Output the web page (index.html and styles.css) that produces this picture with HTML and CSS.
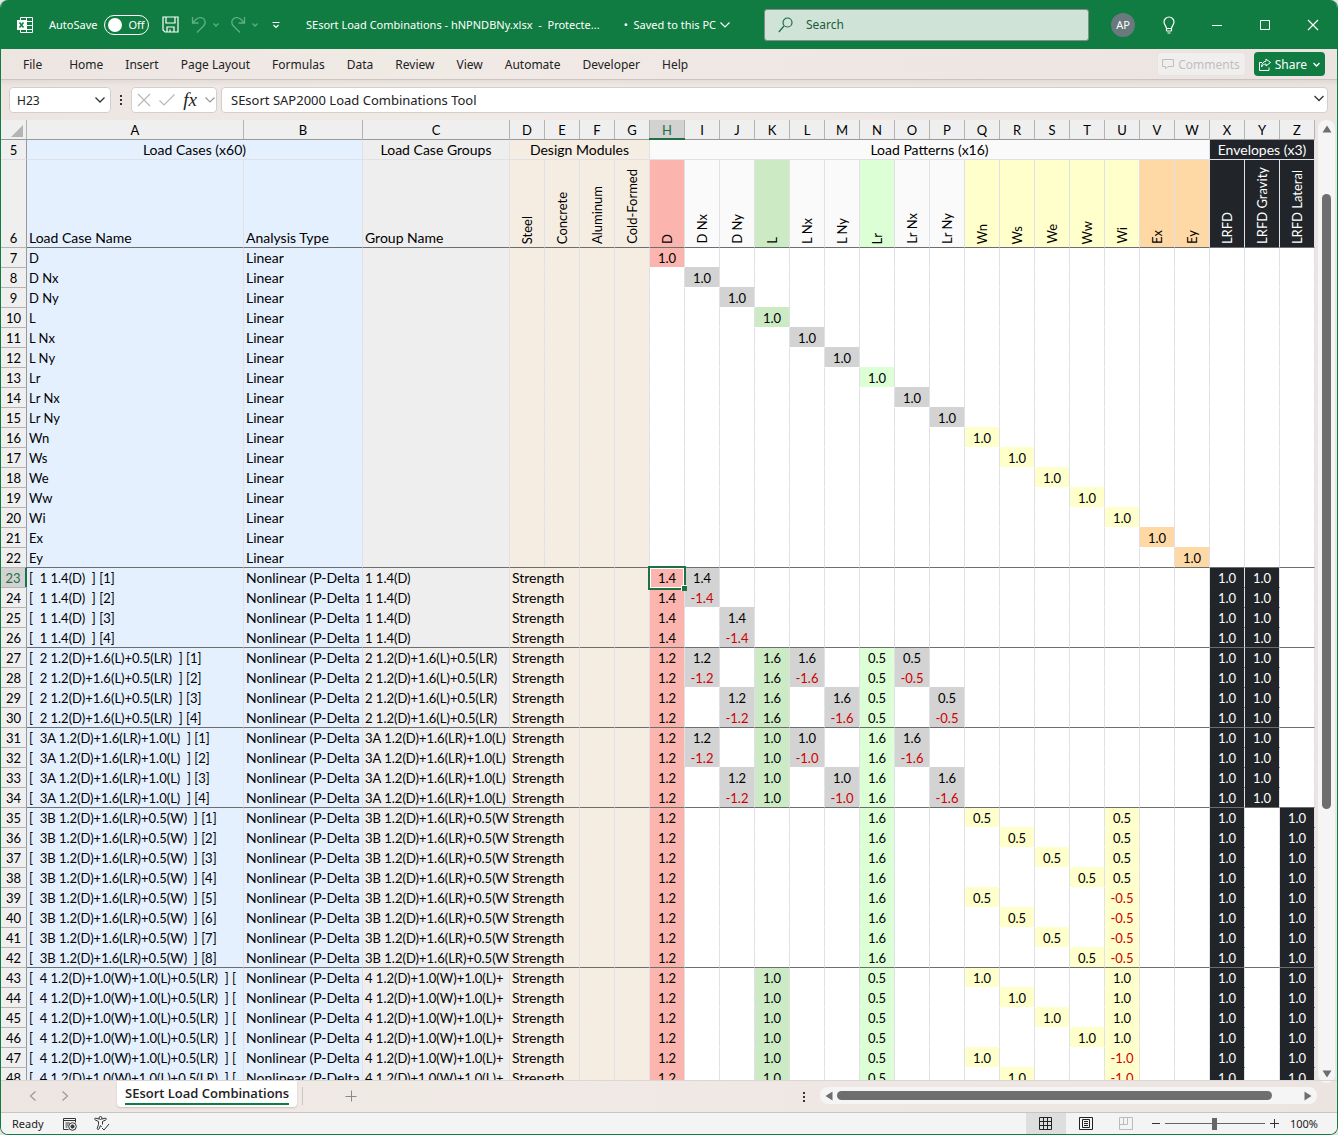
FILE: index.html
```html
<!DOCTYPE html>
<html lang="en">
  <head>
    <meta charset="UTF-8" />
    <meta name="viewport" content="width=device-width, initial-scale=1.0" />
    <title>SEsort Load Combinations</title>
    <link rel="stylesheet" href="styles.css">
  </head>
  <body>
    <div class="window">
      <!-- Title bar -->
      <header class="titlebar">
        <div class="title-left">
          <svg class="app-icon" width="18" height="18" viewBox="0 0 18 18" fill="none" stroke="#fff">
            <path d="M4.5 4V1.5h12v15h-12V14M10.5 1.5v15M10.5 5.5h6M10.5 9.500h6M10.500 13.500h6M4.500 4.500h6M4.500 13.500h6" />
            <path d="M1 4h9v10H1z" fill="#fff" stroke="none" />
            <path d="M3.500 6.500l4 5M7.500 6.500l-4 5" stroke="#107c41" stroke-width="1.500" />
          </svg>
          <label class="autosave">
            <span>AutoSave</span>
            <span class="switch"><input type="checkbox" class="switch-input" /><span class="switch-text">Off</span></span>
          </label>
          <button class="icon-btn" aria-label="Save">
            <svg width="17" height="17" viewBox="0 0 17 17" fill="none" stroke="#fff" stroke-width="1.200">
              <path d="M1 1h15v15H3l-2-2zM4 1v6h9V1M5 16v-5h7v5M8 13.500V16" />
            </svg>
          </button>
          <button class="icon-btn undo" aria-label="Undo">
            <svg width="28" height="18" viewBox="0 0 28 18" fill="none" stroke="#5cb083" stroke-width="1.300">
              <path d="M1.500 1v6h6M1.500 7l4-4c3-2.500 7-1.500 8.300 1.500.9 2.300.2 4-1.300 5.500L6 16.500M22.500 7.500l2.500 2.500 2.500-2.500" />
            </svg>
          </button>
          <button class="icon-btn redo" aria-label="Redo">
            <svg width="28" height="18" viewBox="0 0 28 18" fill="none" stroke="#5cb083" stroke-width="1.300">
              <path d="M14.500 1v6h-6M14.500 7l-4-4C7.500.5 3.500 1.500 2.200 4.500c-.9 2.300-.2 4 1.300 5.500l6.500 6.500M22.500 7.500L25 10l2.500-2.500" />
            </svg>
          </button>
          <button class="icon-btn customize" aria-label="Customize toolbar">
            <svg width="8" height="8" viewBox="0 0 8 8" fill="none" stroke="#fff" stroke-width="1.200">
              <path d="M.5 1.500h7M1.500 4L4 6.500 6.500 4" />
            </svg>
          </button>
        </div>
        <div class="doc-title">
          <span class="doc-name">SEsort Load Combinations - hNPNDBNy.xlsx&nbsp; -&nbsp; Protecte...</span>
          <button class="saved">•&nbsp; Saved to this PC
            <svg width="10" height="6" viewBox="0 0 10 6" fill="none" stroke="#fff" stroke-width="1.200"><path d="M.5.5L5 5 9.500.5" /></svg>
          </button>
        </div>
        <label class="search">
          <svg width="15" height="16" viewBox="0 0 15 16" fill="none" stroke="#1d6b40" stroke-width="1.200">
            <circle cx="9.500" cy="5.500" r="4.500" /><path d="M6 9L.8 15" />
          </svg>
          <input type="text" placeholder="Search" aria-label="Search" />
        </label>
        <div class="title-right">
          <button class="avatar">AP</button>
          <button class="icon-btn" aria-label="Tips">
            <svg width="12" height="18" viewBox="0 0 12 18" fill="none" stroke="#fff" stroke-width="1.200">
              <path d="M3.500 12.500c0-2.500-2.500-3.500-2.500-6.500a5 5 0 0 1 10 0c0 3-2.500 4-2.500 6.500zM3.500 15h5M4.500 17h3M3.500 12v3M8.500 12v3" />
            </svg>
          </button>
          <button class="icon-btn" aria-label="Minimize">
            <svg width="12" height="12" viewBox="0 0 12 12" stroke="#fff"><path d="M1 6.500h10" /></svg>
          </button>
          <button class="icon-btn" aria-label="Maximize">
            <svg width="12" height="12" viewBox="0 0 12 12" fill="none" stroke="#fff"><path d="M1.500 1.500h9v9h-9z" /></svg>
          </button>
          <button class="icon-btn" aria-label="Close">
            <svg width="12" height="12" viewBox="0 0 12 12" stroke="#fff" stroke-width="1.200"><path d="M1 1l10 10M11 1L1 11" /></svg>
          </button>
        </div>
      </header>

      <!-- Ribbon tabs -->
      <nav class="menu">
        <a href="#" class="menu-file">File</a>
        <a href="#">Home</a>
        <a href="#">Insert</a>
        <a href="#">Page Layout</a>
        <a href="#">Formulas</a>
        <a href="#">Data</a>
        <a href="#">Review</a>
        <a href="#">View</a>
        <a href="#">Automate</a>
        <a href="#">Developer</a>
        <a href="#">Help</a>
        <div class="menu-actions">
          <button class="comments" disabled>
            <svg width="12" height="12" viewBox="0 0 12 12" fill="none" stroke="#c0bebe"><path d="M.5 1.500h11v7H6L3.500 11V8.500h-3z" /></svg>
            Comments
          </button>
          <button class="share">
            <svg width="12" height="13" viewBox="0 0 12 13" fill="none" stroke="#fff">
              <path d="M3 4.500H.5v8h9.500V9.500M7 1l4.500 3.500L7 8V6C5 6 3.500 7 2.500 9 2.700 5.500 4.500 3.500 7 3.200z" />
            </svg>
            Share
            <svg class="share-arrow" width="7" height="5" viewBox="0 0 7 5" fill="none" stroke="#fff" stroke-width="1.300"><path d="M.5 1l3 3 3-3" /></svg>
          </button>
        </div>
      </nav>

      <!-- Formula bar -->
      <div class="formula-bar">
        <div class="name-box">
          <input type="text" value="H23" aria-label="Name box" />
          <button class="icon-btn" aria-label="Open name list">
            <svg width="10" height="6" viewBox="0 0 10 6" fill="none" stroke="#333" stroke-width="1.300"><path d="M.5.5L5 5 9.500.5" /></svg>
          </button>
        </div>
        <svg class="grip" width="4" height="12" viewBox="0 0 4 12" fill="#333"><path d="M1 1h2v2H1zM1 5h2v2H1zM1 9h2v2H1z" /></svg>
        <div class="fx-box">
          <button class="icon-btn" aria-label="Cancel">
            <svg width="14" height="14" viewBox="0 0 14 14" stroke="#b8b8b8" stroke-width="1.200"><path d="M1 1l12 12M13 1L1 13" /></svg>
          </button>
          <button class="icon-btn" aria-label="Enter">
            <svg width="16" height="12" viewBox="0 0 16 12" fill="none" stroke="#b8b8b8" stroke-width="1.200"><path d="M.5 6.500L5 11 15.500.5" /></svg>
          </button>
          <button class="fx">fx</button>
          <button class="icon-btn" aria-label="Functions">
            <svg width="10" height="6" viewBox="0 0 10 6" fill="none" stroke="#999" stroke-width="1.200"><path d="M.5.5L5 5 9.500.5" /></svg>
          </button>
        </div>
        <div class="formula">
          <input type="text" value="SEsort SAP2000 Load Combinations Tool" aria-label="Formula" />
          <button class="icon-btn" aria-label="Expand formula bar">
            <svg width="10" height="10" viewBox="0 0 10 10" fill="none" stroke="#333" stroke-width="1.300"><path d="M.5 1L5 5.500 9.500 1" /></svg>
          </button>
        </div>
      </div>

      <!-- Sheet -->
      <main class="sheet">
        <div class="grid">
          <table class="cells">
            <colgroup>
              <col class="col-num" /><col /><col class="col-type" /><col class="col-group" /><col span="23" class="col-value" />
            </colgroup>
            <thead>
              <tr id="letters" class="letters"></tr>
              <tr class="bands">
                <th class="num">5</th>
                <th class="blue" colspan="2">Load Cases (x60)</th>
                <th class="grey">Load Case Groups</th>
                <th class="sand" colspan="4">Design Modules</th>
                <th class="pale" colspan="16">Load Patterns (x16)</th>
                <th class="dark" colspan="3">Envelopes (x3)</th>
              </tr>
              <tr id="names" class="names">
                <th class="num">6</th>
                <th class="word blue">Load Case Name</th>
                <th class="word blue">Analysis Type</th>
                <th class="word grey">Group Name</th>
              </tr>
            </thead>
            <tbody id="cases"></tbody>
          </table>
        </div>
        <div class="vscroll">
          <svg width="10" height="8" viewBox="0 0 10 8" fill="#6e6e6e"><path d="M5 .5L9.500 7.500h-9z" /></svg>
          <div class="vtrack"><div class="vthumb"></div></div>
          <svg width="10" height="8" viewBox="0 0 10 8" fill="#6e6e6e"><path d="M5 7.500L.5.5h9z" /></svg>
        </div>
      </main>

      <!-- Sheet tabs -->
      <div class="tabs">
        <button class="icon-btn tab-prev" aria-label="Previous sheet">
          <svg width="8" height="10" viewBox="0 0 8 10" fill="none" stroke="#999" stroke-width="1.200"><path d="M6.500.5l-5 4.500 5 4.500" /></svg>
        </button>
        <button class="icon-btn tab-next" aria-label="Next sheet">
          <svg width="8" height="10" viewBox="0 0 8 10" fill="none" stroke="#999" stroke-width="1.200"><path d="M1.500.5l5 4.500-5 4.500" /></svg>
        </button>
        <button class="tab"><span>SEsort Load Combinations</span></button>
        <span class="tab-line"></span>
        <button class="icon-btn tab-add" aria-label="New sheet">
          <svg width="12" height="12" viewBox="0 0 12 12" stroke="#888"><path d="M.5 6.500h11M6.500.5v11" /></svg>
        </button>
        <svg class="tab-grip" width="4" height="12" viewBox="0 0 4 12" fill="#333"><path d="M1 1h2v2H1zM1 5h2v2H1zM1 9h2v2H1z" /></svg>
        <div class="hscroll">
          <svg width="8" height="10" viewBox="0 0 8 10" fill="#6e6e6e"><path d="M.5 5l7-4.500v9z" /></svg>
          <div class="htrack"><div class="hthumb"></div></div>
          <svg width="8" height="10" viewBox="0 0 8 10" fill="#6e6e6e"><path d="M7.500 5l-7-4.500v9z" /></svg>
        </div>
      </div>

      <!-- Status bar -->
      <footer class="status">
        <span class="ready">Ready</span>
        <button class="icon-btn" aria-label="Record macro">
          <svg width="16" height="14" viewBox="0 0 16 14" fill="none" stroke="#333">
            <path d="M6.500 12.500h-5v-11h12v4M1.500 3.500h12M3.500 6h4M3.500 8h3M3.500 10h2" /><circle cx="10.500" cy="9.500" r="3.800" /><circle cx="10.500" cy="9.500" r="1.600" fill="#333" />
          </svg>
        </button>
        <button class="icon-btn access" aria-label="Accessibility">
          <svg width="16" height="15" viewBox="0 0 16 15" fill="none" stroke="#333">
            <circle cx="6.500" cy="2" r="1.500" /><path d="M5 3L1.500 2.200c-1 0-1.200 1.300-.3 1.700L4.500 5.500v3l-1.300 4c0 1.200 1.400 1.400 1.800.5L6.500 9.500l1 1.500M8 3l3.500-.8c1 0 1.200 1.300.3 1.700L8.500 5.500v3M8 12l2 2 5-6" />
          </svg>
        </button>
        <div class="views">
          <button class="view active" aria-label="Normal view">
            <svg width="14" height="14" viewBox="0 0 14 14" fill="none" stroke="#222"><path d="M.5.5h12v12H.5zM4.500.5v12M8.500.5v12M.5 4.500h12M.5 8.500h12" /></svg>
          </button>
          <button class="view" aria-label="Page layout view">
            <svg width="14" height="14" viewBox="0 0 14 14" fill="none" stroke="#222"><path d="M.5.5h13v12H.5zM3.500 2.500h7v8h-7zM5 4.500h4M5 6.500h4M5 8.500h4" /></svg>
          </button>
          <button class="view" aria-label="Page break view">
            <svg width="14" height="14" viewBox="0 0 14 14" fill="none" stroke="#bbb"><path d="M.5.5h13v12H.5zM.5 7.500h8v-7M4.500.5v7" /></svg>
          </button>
        </div>
        <div class="zoom">
          <button class="icon-btn" aria-label="Zoom out"><svg width="8" height="10" viewBox="0 0 8 10" stroke="#333"><path d="M0 4.500h8" /></svg></button>
          <input type="range" min="0" max="200" value="100" aria-label="Zoom" />
          <button class="icon-btn" aria-label="Zoom in"><svg width="9" height="10" viewBox="0 0 9 10" stroke="#333"><path d="M0 4.500h9M4.500 0v9" /></svg></button>
          <span class="zoom-value">100%</span>
        </div>
      </footer>
    </div>
    <script src="script.js"></script>
  </body>
</html>
```
FILE: styles.css
```css
* {
  box-sizing: border-box;
}
body {
  margin: 0;
  background-color: #e4e4e4;
  font-family: "Noto Sans", "Open Sans", sans-serif;
  font-size: 12px;
  color: #222;
}
button,
input {
  font: inherit;
  color: inherit;
  margin: 0;
  padding: 0;
  border: none;
  background: none;
  outline: none;
}
button {
  cursor: pointer;
}
svg {
  display: block;
  flex: none;
}
.window {
  display: flex;
  flex-direction: column;
  height: 100vh;
  overflow: hidden;
  border: 1px solid #107c41;
  border-top: none;
  border-radius: 8px;
  background: linear-gradient(90deg, #ede5e2, #f0eae5 30%, #f0e8e5 50%, #ece4e1);
}
.icon-btn {
  display: flex;
  align-items: center;
  justify-content: center;
}

/* Title bar */
.titlebar {
  display: flex;
  align-items: center;
  flex: none;
  height: 49px;
  padding: 0 18px 0 15px;
  background-color: #107c41;
  color: #fff;
}
.title-left {
  display: flex;
  align-items: center;
  flex: none;
  width: 290px;
}
.autosave {
  display: flex;
  align-items: center;
  gap: 7px;
  margin: 0 13px 0 15px;
  font-size: 11px;
}
.switch {
  display: flex;
  align-items: center;
  gap: 6px;
  width: 45px;
  height: 20px;
  padding-left: 3px;
  border: 1px solid #fff;
  border-radius: 10px;
}
.switch-input {
  appearance: none;
  width: 14px;
  height: 14px;
  border-radius: 50%;
  background-color: #fff;
}
.undo {
  margin-left: 12px;
}
.redo {
  margin-left: 11px;
}
.customize {
  margin-left: 14px;
}
.doc-title {
  display: flex;
  align-items: center;
  justify-content: space-between;
  flex: 1;
  padding-right: 34px;
  font-size: 11px;
  white-space: nowrap;
}
.saved {
  display: flex;
  align-items: center;
  gap: 4px;
}
.search {
  display: flex;
  align-items: center;
  gap: 13px;
  flex: none;
  width: 325px;
  height: 32px;
  padding-left: 13px;
  border: 1px solid #8a8a8a;
  border-radius: 3px;
  background-color: #cfe3d7;
  color: #1d5c39;
}
.search input {
  flex: 1;
  min-width: 0;
}
.search input::placeholder {
  color: #1d5c39;
}
.title-right {
  display: flex;
  align-items: center;
  justify-content: flex-end;
  gap: 36px;
  flex: none;
  width: 230px;
}
.avatar {
  width: 24px;
  height: 24px;
  margin-right: -8px;
  border-radius: 50%;
  background-color: #69797e;
  font-size: 11px;
  text-align: center;
}

/* Ribbon tabs */
.menu {
  display: flex;
  align-items: center;
  gap: 22px;
  flex: none;
  height: 31px;
  padding: 0 12px 0 22px;
  border-bottom: 1px solid #cbc4c2;
  white-space: nowrap;
}
.menu a {
  color: #222;
  text-decoration: none;
}
.menu-file {
  margin-right: 5px;
}
.menu-actions {
  display: flex;
  gap: 8px;
  margin-left: auto;
}
.comments,
.share {
  display: flex;
  align-items: center;
  gap: 4px;
  height: 24px;
  padding: 0 5px;
  border-radius: 4px;
}
.comments {
  padding-left: 4px;
  border: 1px solid #e6e3e2;
  background-color: #f1efee;
  color: #c0bebe;
}
.share {
  background-color: #107c41;
  color: #fff;
}
.share-arrow {
  margin-left: 2px;
}

/* Formula bar */
.formula-bar {
  display: flex;
  align-items: center;
  flex: none;
  height: 40px;
  padding: 0 9px 0 8px;
  background: linear-gradient(#0000000d, #0000 6px);
}
.name-box,
.fx-box,
.formula {
  display: flex;
  align-items: center;
  height: 26px;
  border: 1px solid #d2d0ce;
  border-radius: 4px;
  background-color: #fff;
}
.name-box {
  width: 102px;
  padding: 0 5px 0 7px;
}
.name-box input {
  flex: 1;
  min-width: 0;
}
.grip {
  margin: 0 8px;
}
.fx-box {
  justify-content: space-between;
  width: 86px;
  margin-right: 4px;
  padding: 0 1px 0 5px;
}
.fx {
  font: italic 19px "Liberation Serif", serif;
  color: #222;
}
.formula {
  flex: 1;
  padding: 0 3px 0 9px;
}
.formula input {
  flex: 1;
  min-width: 0;
  font-size: 13px;
}

/* Sheet */
.sheet {
  display: flex;
  flex: 1;
  min-height: 0;
}
.grid {
  flex: 1;
  min-width: 0;
  overflow: hidden;
  background-color: #fff;
}
.cells {
  table-layout: fixed;
  width: 100%;
  border-collapse: separate;
  border-spacing: 0;
  font-family: Lato, sans-serif;
  font-size: 13px;
  line-height: 17px;
  color: #000;
}
.col-num {
  width: 26px;
}
.col-type {
  width: 119px;
}
.col-group {
  width: 147px;
}
.col-value {
  width: 35px;
}
.cells th,
.cells td {
  height: 20px;
  padding: 2px 0 0;
  border-top: 1px solid transparent;
  border-right: 1px solid #dfe1e6;
  font-weight: normal;
  text-align: center;
  white-space: pre;
  overflow: hidden;
}
.cells .letters th {
  height: 19px;
  border-top: none;
  border-right-color: #b4b4b4;
  background-color: #efefef;
}
.cells .letters .current {
  position: relative;
  overflow: visible;
  background-color: #d2d2d2;
  color: #1e7145;
}
/* green bar under the active column letter */
.cells .letters .current::after {
  content: "";
  position: absolute;
  left: -1px;
  right: -1px;
  bottom: -1px;
  height: 2px;
  background-color: #1e7145;
}
.corner svg {
  margin-left: 10px;
}
.cells .num {
  border-top-color: #b4b4b4;
  border-right-color: #999;
  background-color: #efefef;
}
.cells .num.current {
  border-right: 2px solid #1e7145;
  background-color: #d2d2d2;
  color: #1e7145;
}
.cells .bands th {
  padding-top: 0;
  border-top-color: #999;
  font-size: 14px;
}
.cells .bands .num {
  padding-top: 2px;
  font-size: 13px;
}
.cells .names th {
  height: 88px;
  padding: 0 2px;
  border-top-color: #dfe1e6;
  text-align: left;
  vertical-align: bottom;
}
.cells .names .num {
  padding: 0;
  text-align: center;
}
.cells .names .word {
  padding-bottom: 1px;
}
.upright {
  writing-mode: vertical-rl;
  transform: rotate(180deg);
  width: 100%;
  padding-top: 3px;
  line-height: 30px;
}
.cells .left {
  padding-left: 2px;
  text-align: left;
}
.cells .word {
  padding-top: 0;
  font-size: 14px;
}
.cells .group td {
  border-top-color: #6e6e6e;
}
.cells .negative {
  color: #d00000;
}
.cells .picked {
  position: relative;
  overflow: visible;
}
/* selection frame with its fill handle */
.frame {
  position: absolute;
  inset: -2px -2px -3px -2px;
  border: 2px solid #1e7145;
  box-shadow: inset 0 0 0 1px #fff;
}
.frame::after {
  content: "";
  position: absolute;
  right: -3px;
  bottom: -3px;
  width: 5px;
  height: 5px;
  border: 1px solid #fff;
  border-width: 1px 0 0 1px;
  box-sizing: content-box;
  background-color: #1e7145;
}

/* Cell fills */
.blue {
  background-color: #e5f0ff;
}
.grey {
  background-color: #eeeeee;
}
.sand {
  background-color: #f5ede2;
}
.pale {
  background-color: #fafafa;
}
.silver {
  background-color: #d3d3d3;
}
.red {
  background-color: #fbb4ae;
}
.green {
  background-color: #ccebc5;
}
.lime {
  background-color: #ddffd6;
}
.yellow {
  background-color: #ffffcc;
}
.orange {
  background-color: #fed9a6;
}
.dark {
  background-color: #212529;
  color: #fff;
}

/* Scroll bars */
.vscroll {
  display: flex;
  flex-direction: column;
  align-items: center;
  width: 17px;
  margin: 0 2px -3px 3px;
  padding: 5px 0;
  border-radius: 8px;
  background-color: #f5f5f5;
}
.vtrack {
  flex: 1;
  width: 9px;
  margin: 4px 0;
  padding-top: 57px;
}
.vthumb {
  height: 70.5%;
  border-radius: 5px;
  background-color: #6e6e6e;
}
.hscroll {
  display: flex;
  align-items: center;
  width: 497px;
  height: 17px;
  padding: 0 5px;
  border-radius: 8px;
  background-color: #f5f5f5;
}
.htrack {
  flex: 1;
  margin: 0 4px;
}
.hthumb {
  width: 94%;
  height: 9px;
  border-radius: 5px;
  background-color: #6e6e6e;
}

/* Sheet tabs */
.tabs {
  display: flex;
  align-items: center;
  flex: none;
  height: 33px;
  padding: 0 20px 2px 28px;
  border-top: 1px solid #dcd6d4;
  border-bottom: 1px solid #c8c4c2;
}
.tab-next {
  margin-left: 24px;
}
.tab {
  align-self: flex-start;
  margin-left: 48px;
  padding: 3px 8px 2px;
  border-radius: 0 0 4px 4px;
  background-color: #fff;
  box-shadow: 0 1px 2px #00000026;
  font-family: "Open Sans", sans-serif;
  font-size: 13px;
  font-weight: 600;
}
.tab span {
  display: block;
  line-height: 19px;
  border-bottom: 2px solid #107c41;
}
.tab-line {
  width: 1px;
  height: 18px;
  margin-left: 5px;
  background-color: #ccc6c4;
}
.tab-add {
  margin-left: 42px;
}
.tab-grip {
  margin: 2px 14px 0 auto;
}

/* Status bar */
.status {
  display: flex;
  align-items: center;
  flex: none;
  height: 21px;
  padding: 0 19px 0 11px;
  background-color: #f4f4f4;
  font-size: 11px;
}
.ready {
  width: 50px;
}
.access {
  margin-left: 16px;
}
.views {
  display: flex;
  align-self: stretch;
  margin-left: auto;
}
.view {
  display: flex;
  align-items: center;
  justify-content: center;
  width: 40px;
}
.view.active {
  background-color: #dedede;
}
.zoom {
  display: flex;
  align-items: center;
  gap: 5px;
  margin-left: 6px;
}
.zoom input {
  appearance: none;
  width: 100px;
  height: 12px;
  background: linear-gradient(#666, #666) center / 100% 1px no-repeat;
}
.zoom input::-webkit-slider-thumb {
  appearance: none;
  width: 5px;
  height: 12px;
  background-color: #666;
}
.zoom-value {
  margin-left: 6px;
}
```
FILE: script.js
```js
const letters = "ABCDEFGHIJKLMNOPQRSTUVWXYZ";

// heading and fill of the columns D to Z
const columns = [
  ["D", "Steel", "sand"], ["E", "Concrete", "sand"], ["F", "Aluminum", "sand"], ["G", "Cold-Formed", "sand"],
  ["H", "D", "red"], ["I", "D Nx", "silver"], ["J", "D Ny", "silver"],
  ["K", "L", "green"], ["L", "L Nx", "silver"], ["M", "L Ny", "silver"],
  ["N", "Lr", "lime"], ["O", "Lr Nx", "silver"], ["P", "Lr Ny", "silver"],
  ["Q", "Wn", "yellow"], ["R", "Ws", "yellow"], ["S", "We", "yellow"], ["T", "Ww", "yellow"], ["U", "Wi", "yellow"],
  ["V", "Ex", "orange"], ["W", "Ey", "orange"],
  ["X", "LRFD", "dark"], ["Y", "LRFD Gravity", "dark"], ["Z", "LRFD Lateral", "dark"],
];

const gravity = { X: 1, Y: 1 };
const lateral = { X: 1, Z: 1 };

// load combinations: one entry of values per permutation
// label and group are set where the column is too narrow for the full text
const combos = [
  { name: "1 1.4(D)", all: { H: 1.4, ...gravity }, rows: [{ I: 1.4 }, { I: -1.4 }, { J: 1.4 }, { J: -1.4 }] },
  {
    name: "2 1.2(D)+1.6(L)+0.5(LR)",
    all: { H: 1.2, K: 1.6, N: 0.5, ...gravity },
    rows: [{ I: 1.2, L: 1.6, O: 0.5 }, { I: -1.2, L: -1.6, O: -0.5 }, { J: 1.2, M: 1.6, P: 0.5 }, { J: -1.2, M: -1.6, P: -0.5 }],
  },
  {
    name: "3A 1.2(D)+1.6(LR)+1.0(L)",
    all: { H: 1.2, K: 1, N: 1.6, ...gravity },
    rows: [{ I: 1.2, L: 1, O: 1.6 }, { I: -1.2, L: -1, O: -1.6 }, { J: 1.2, M: 1, P: 1.6 }, { J: -1.2, M: -1, P: -1.6 }],
  },
  {
    name: "3B 1.2(D)+1.6(LR)+0.5(W)",
    group: "3B 1.2(D)+1.6(LR)+0.5(W",
    all: { H: 1.2, N: 1.6, ...lateral },
    rows: [
      { Q: 0.5, U: 0.5 }, { R: 0.5, U: 0.5 }, { S: 0.5, U: 0.5 }, { T: 0.5, U: 0.5 },
      { Q: 0.5, U: -0.5 }, { R: 0.5, U: -0.5 }, { S: 0.5, U: -0.5 }, { T: 0.5, U: -0.5 },
    ],
  },
  {
    name: "4 1.2(D)+1.0(W)+1.0(L)+0.5(LR)",
    label: "[  4 1.2(D)+1.0(W)+1.0(L)+0.5(LR)  ] [",
    group: "4 1.2(D)+1.0(W)+1.0(L)+",
    all: { H: 1.2, K: 1, N: 0.5, ...lateral },
    rows: [{ Q: 1, U: 1 }, { R: 1, U: 1 }, { S: 1, U: 1 }, { T: 1, U: 1 }, { Q: 1, U: -1 }, { R: 1, U: -1 }],
  },
];

const current = { column: "H", row: 23 };
let rowNumber = 7;

function addLetters() {
  let html = `<th class="corner"><svg width="12" height="12" viewBox="0 0 12 12"><path d="M12 0v12H0z" fill="#b4b4b4"/></svg></th>`;
  for (const letter of letters) {
    html += `<th${letter === current.column ? ' class="current"' : ""}>${letter}</th>`;
  }
  document.getElementById("letters").innerHTML = html;
}

function addNames() {
  let html = "";
  columns.forEach(([, name, fill]) => {
    html += `<th class="${fill === "silver" ? "pale" : fill}"><div class="upright">${name}</div></th>`;
  });
  document.getElementById("names").innerHTML += html;
}

function addCase(name, type, group, values, first) {
  const row = document.createElement("tr");
  const isCurrent = rowNumber === current.row;
  if (first) {
    row.className = "group";
  }
  let html = `<th class="num${isCurrent ? " current" : ""}">${rowNumber}</th>
    <td class="left blue">${name}</td><td class="left word blue">${type}</td><td class="left grey">${group}</td>`;
  // the module name runs over into the next column
  html += group ? `<td class="left word sand" colspan="2">Strength</td>` : `<td class="sand"></td><td class="sand"></td>`;
  html += `<td class="sand"></td><td class="sand"></td>`;

  columns.slice(4).forEach(([letter, , fill]) => {
    const value = values[letter];
    if (value === undefined) {
      html += "<td></td>";
      return;
    }
    const picked = isCurrent && letter === current.column;
    html += `<td class="${fill}${value < 0 ? " negative" : ""}${picked ? " picked" : ""}">${value.toFixed(1)}${picked ? '<div class="frame"></div>' : ""}</td>`;
  });

  row.innerHTML = html;
  document.getElementById("cases").appendChild(row);
  rowNumber++;
}

addLetters();
addNames();
columns.slice(4, 20).forEach(([letter, name], i) => {
  addCase(name, "Linear", "", { [letter]: 1 }, i === 0);
});
combos.forEach((combo) => {
  combo.rows.forEach((values, i) => {
    const label = combo.label || `[  ${combo.name}  ] [${i + 1}]`;
    addCase(label, "Nonlinear (P-Delta", combo.group || combo.name, { ...combo.all, ...values }, i === 0);
  });
});
```
